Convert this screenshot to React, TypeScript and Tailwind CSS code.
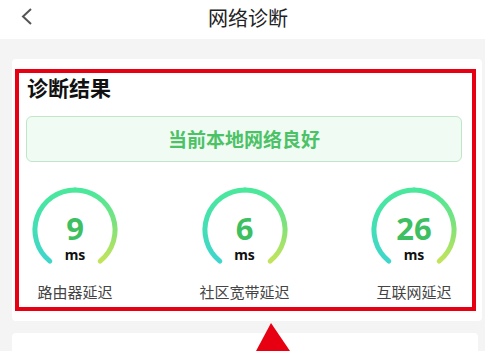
import React from 'react';

const cjk = { fontFamily: '"Noto Sans CJK SC", "Noto Sans", sans-serif' };

type Item = { value: string; label: string };

const items: Item[] = [
  { value: '9', label: '路由器延迟' },
  { value: '6', label: '社区宽带延迟' },
  { value: '26', label: '互联网延迟' },
];

function Gauge({ value, label, id }: Item & { id: string }) {
  return (
    <div className="flex flex-col items-center w-[90px]">
      <div className="relative w-[90px] h-[90px]">
        <svg width="90" height="90" viewBox="0 0 90 90">
          <defs>
            <linearGradient id={`${id}-l`} gradientUnits="userSpaceOnUse" x1="0" y1="76" x2="0" y2="5">
              <stop offset="0" stopColor="#3fd6cc" />
              <stop offset="1" stopColor="#4ae89c" />
            </linearGradient>
            <linearGradient id={`${id}-r`} gradientUnits="userSpaceOnUse" x1="0" y1="5" x2="0" y2="76">
              <stop offset="0" stopColor="#4ae89c" />
              <stop offset="0.5" stopColor="#7fe27a" />
              <stop offset="1" stopColor="#c2e45a" />
            </linearGradient>
          </defs>
          <path d="M 19.8 76.1 A 40 40 0 0 1 45 5" fill="none" stroke={`url(#${id}-l)`} strokeWidth="5" strokeLinecap="round" />
          <path d="M 45 5 A 40 40 0 0 1 70.2 76.1" fill="none" stroke={`url(#${id}-r)`} strokeWidth="5" strokeLinecap="round" />
        </svg>
        <div className="absolute inset-0 flex flex-col items-center pt-[28px]">
          <span className="text-[31px] leading-[30px] font-bold text-[#3ebf62]" style={{ fontFamily: '"Noto Sans", sans-serif' }}>
            {value}
          </span>
          <span className="text-[14px] leading-[16px] font-bold text-[#111] mt-[4px]" style={{ fontFamily: '"Noto Sans", sans-serif' }}>
            ms
          </span>
        </div>
      </div>
      <div className="mt-[6px] text-[15px] leading-[22px] text-[#444] whitespace-nowrap">{label}</div>
    </div>
  );
}

export default function App() {
  return (
    <div className="relative w-[496px] h-[351px] overflow-hidden bg-white" style={cjk}>
      {/* Header */}
      <div className="h-[39px] flex items-center relative">
        <svg className="absolute left-[20px] top-[8px]" width="13" height="17" viewBox="0 0 13 17">
          <polyline points="11,1 3,8.5 11,16" fill="none" stroke="#555" strokeWidth="2" />
        </svg>
        <div className="flex-1 text-center text-[20px] leading-[26px] text-[#222] -mt-[4px]">网络诊断</div>
      </div>

      {/* Body */}
      <div className="bg-[#f4f4f4] w-[485px] h-[312px] pt-[20px] pl-[12px] pr-[3px]">
        <div className="bg-white rounded-[4px] pt-[10px] pb-[10px] pl-[3px] pr-[6px]">
          <div className="border-4 border-[#e60012] pb-[4px]">
            <div className="pl-[8px] text-[21px] leading-[28px] font-bold text-[#111]">诊断结果</div>
            <div className="mt-[15px] ml-[7px] mr-[10px] h-[46px] rounded-[6px] border border-[#bfe6c9] bg-[#f0fbf3] flex items-center justify-center">
              <span className="text-[19px] font-bold text-[#4cc266]">当前本地网络良好</span>
            </div>
            <div className="mt-[23px] flex justify-between pl-[11px] pr-[13px]">
              {items.map((it, i) => (
                <Gauge key={it.label} id={`g${i}`} {...it} />
              ))}
            </div>
          </div>
        </div>
        <div className="mt-[12px] bg-white rounded-[4px] h-[40px] mr-[4px]" />
      </div>

      {/* annotation arrow */}
      <svg className="absolute left-[250px] top-[320px]" width="50" height="31" viewBox="0 0 50 31">
        <polygon points="21,3 6,31 40,31" fill="#e60012" />
      </svg>
    </div>
  );
}
